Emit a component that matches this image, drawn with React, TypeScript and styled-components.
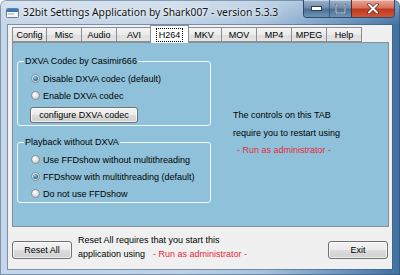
import React from "react";
import styled, { createGlobalStyle } from "styled-components";

const GlobalStyle = createGlobalStyle`
  html, body { margin: 0; padding: 0; width: 400px; height: 275px; overflow: hidden; background: #ffffff; }
  body { font-family: "Liberation Sans", Arial, sans-serif; }
  * { box-sizing: border-box; }
`;

const Window = styled.div`
  width: 400px;
  height: 275px;
  display: flex;
  flex-direction: column;
  border-radius: 6px 6px 0 0;
  overflow: hidden;
  background:
    linear-gradient(to bottom, rgba(255, 255, 255, 0.35) 0px, rgba(255, 255, 255, 0) 25px),
    linear-gradient(to right, #c4d6e8 0%, #bfd2e5 45%, #a6c1dc 66%, #6f98c2 84%, #41709f 100%);
  box-shadow: inset 0 0 0 1px rgba(40, 70, 100, 0.45);
`;

const TitleBar = styled.div`
  height: 25px;
  flex-shrink: 0;
  display: flex;
  align-items: flex-start;
  padding: 0 5px 0 6px;
`;

const AppIcon = styled.svg`
  width: 13px;
  height: 10px;
  margin-top: 8px;
  flex-shrink: 0;
`;

const TitleText = styled.div`
  margin-left: 4px;
  margin-top: 5px;
  font-family: "Noto Sans", "Open Sans", sans-serif;
  font-size: 10.3px;
  line-height: 14px;
  color: #111;
  white-space: nowrap;
  text-shadow: 0 0 6px rgba(255, 255, 255, 0.9), 0 0 2px rgba(255, 255, 255, 0.8);
`;

const CaptionGroup = styled.div`
  margin-left: auto;
  display: flex;
  height: 18px;
  border: 1px solid #2f4a68;
  border-top: none;
  border-radius: 0 0 4px 4px;
  overflow: hidden;
`;

const CaptionButton = styled.div<{ $w: number; $close?: boolean }>`
  width: ${(p) => p.$w}px;
  height: 100%;
  display: flex;
  align-items: center;
  justify-content: center;
  border-left: ${(p) => (p.$close ? "1px solid #5a2a22" : "1px solid rgba(40, 60, 90, 0.6)")};
  background: ${(p) =>
    p.$close
      ? "linear-gradient(to bottom, #e9a898 0%, #d5735d 45%, #c2381d 55%, #d0563a 100%)"
      : "linear-gradient(to bottom, #9cb4cc 0%, #6f8eae 45%, #4d6f96 55%, #6e93b9 100%)"};
  box-shadow: inset 0 1px 0 rgba(255, 255, 255, 0.45);
  &:first-child { border-left: none; }
`;

const Client = styled.div`
  flex: 1;
  margin: 0 8px 6px 8px;
  background: #f0f0f0;
  display: flex;
  flex-direction: column;
  box-shadow: 0 0 0 1px rgba(60, 90, 120, 0.55);
`;

const TabStrip = styled.div`
  height: 17px;
  flex-shrink: 0;
  display: flex;
  align-items: flex-end;
  padding-left: 4px;
  position: relative;
  z-index: 1;
`;

const Tab = styled.div<{ $active?: boolean }>`
  width: ${(p) => (p.$active ? 39 : 35)}px;
  height: ${(p) => (p.$active ? 18 : 15)}px;
  margin: ${(p) => (p.$active ? "0 -2px -1px -2px" : "0")};
  border: 1px solid #8c8e94;
  border-bottom: ${(p) => (p.$active ? "none" : "1px solid #8c8e94")};
  border-left: ${(p) => (p.$active ? "1px solid #8c8e94" : "none")};
  background: ${(p) =>
    p.$active ? "#ffffff" : "linear-gradient(to bottom, #f4f4f4 0%, #ebebeb 50%, #dedede 51%, #e4e4e4 100%)"};
  display: flex;
  align-items: center;
  justify-content: center;
  font-size: 9px;
  color: #000;
  position: relative;
  z-index: ${(p) => (p.$active ? 2 : 1)};
  &:first-child { border-left: 1px solid #8c8e94; }
`;

const FocusLabel = styled.span`
  outline: 1px dotted #000;
  padding: 1px 2px;
  line-height: 10px;
`;

const Panel = styled.div`
  height: 185px;
  flex-shrink: 0;
  margin: 0 3px 0 4px;
  border: 1px solid #8c8e94;
  background: #8fc2da;
  display: flex;
`;

const LeftColumn = styled.div`
  padding: 13px 0 0 4px;
  display: flex;
  flex-direction: column;
  gap: 11px;
`;

const GroupBox = styled.fieldset<{ $pb: number }>`
  margin: 0;
  width: 194px;
  min-inline-size: 0;
  border: 1px solid #f2f8fb;
  border-radius: 3px;
  padding: 3px 0 ${(p) => p.$pb}px 13px;
`;

const Legend = styled.legend`
  padding: 0 1px;
  margin-left: -7px;
  font-size: 9px;
  line-height: 11px;
  color: #000;
`;

const RadioRow = styled.div`
  height: 17px;
  display: flex;
  align-items: center;
  gap: 3px;
  font-size: 9px;
  color: #000;
  white-space: nowrap;
`;

const RadioCircle = styled.span<{ $checked?: boolean }>`
  width: 9px;
  height: 9px;
  border-radius: 50%;
  border: 1px solid #8a8c8e;
  background: radial-gradient(circle at 35% 30%, #ffffff 0%, #e6e6e6 45%, #c9cbcd 100%);
  display: flex;
  align-items: center;
  justify-content: center;
  flex-shrink: 0;
  &::after {
    content: "";
    display: ${(p) => (p.$checked ? "block" : "none")};
    width: 5px;
    height: 5px;
    border-radius: 50%;
    background: radial-gradient(circle at 40% 35%, #8fd0f4 0%, #2a7ab8 55%, #0f3f70 100%);
  }
`;

const PushButton = styled.div<{ $w: number; $h: number }>`
  width: ${(p) => p.$w}px;
  height: ${(p) => p.$h}px;
  border: 1px solid #707070;
  border-radius: 3px;
  background: linear-gradient(to bottom, #f3f3f3 0%, #ebebeb 48%, #dddddd 52%, #cfcfcf 100%);
  box-shadow: inset 0 0 0 1px rgba(255, 255, 255, 0.7);
  display: flex;
  align-items: center;
  justify-content: center;
  font-size: 9px;
  color: #000;
  white-space: nowrap;
  flex-shrink: 0;
`;

const ConfigureButton = styled(PushButton)`
  margin-top: 3px;
  margin-left: -1px;
`;

const RightColumn = styled.div`
  padding: 64px 0 0 22px;
  font-size: 9px;
  line-height: 17.5px;
  color: #000;
  white-space: nowrap;
`;

const RedText = styled.span<{ $pad: number }>`
  color: #e4283a;
  padding-left: ${(p) => p.$pad}px;
`;

const BottomBar = styled.div`
  flex: 1;
  display: flex;
  align-items: flex-start;
  padding: 14px 4px 0 4px;
`;

const Note = styled.div`
  margin-left: 6px;
  margin-top: -8px;
  font-size: 9px;
  line-height: 14px;
  color: #000;
  white-space: nowrap;
`;

const Spacer = styled.div`
  flex: 1;
`;

const tabs = ["Config", "Misc", "Audio", "AVI", "H264", "MKV", "MOV", "MP4", "MPEG", "Help"];

export default function App() {
  return (
    <>
      <GlobalStyle />
      <Window>
        <TitleBar>
          <AppIcon viewBox="0 0 13 10">
            <rect x="0.5" y="0.5" width="12" height="9" rx="1" fill="#f4f6f8" stroke="#6d7f92" />
            <rect x="1" y="1" width="11" height="3" fill="#3c78b8" />
            <rect x="2" y="5.5" width="6" height="1" fill="#9aa8b6" />
          </AppIcon>
          <TitleText>32bit Settings Application by Shark007 - version 5.3.3</TitleText>
          <CaptionGroup>
            <CaptionButton $w={25}>
              <svg width="11" height="5" viewBox="0 0 11 5">
                <rect x="0.5" y="0.5" width="10" height="4" fill="#ffffff" stroke="#2c3f55" strokeWidth="1" />
              </svg>
            </CaptionButton>
            <CaptionButton $w={22}>
              <svg width="11" height="10" viewBox="0 0 11 10">
                <rect x="1" y="1" width="9" height="8" fill="none" stroke="#2c3f55" strokeWidth="2" />
                <rect x="1" y="1" width="9" height="8" fill="none" stroke="#e8eef4" strokeWidth="1" />
              </svg>
            </CaptionButton>
            <CaptionButton $w={43} $close>
              <svg width="12" height="11" viewBox="0 0 12 11">
                <path d="M2 1.5 L10 9.5 M10 1.5 L2 9.5" stroke="#6b2418" strokeWidth="3.4" strokeLinecap="round" />
                <path d="M2 1.5 L10 9.5 M10 1.5 L2 9.5" stroke="#ffffff" strokeWidth="2" strokeLinecap="round" />
              </svg>
            </CaptionButton>
          </CaptionGroup>
        </TitleBar>
        <Client>
          <TabStrip>
            {tabs.map((t) => (
              <Tab key={t} $active={t === "H264"}>
                {t === "H264" ? <FocusLabel>{t}</FocusLabel> : t}
              </Tab>
            ))}
          </TabStrip>
          <Panel>
            <LeftColumn>
              <GroupBox $pb={2}>
                <Legend>DXVA Codec by Casimir666</Legend>
                <RadioRow>
                  <RadioCircle $checked />
                  Disable DXVA codec (default)
                </RadioRow>
                <RadioRow>
                  <RadioCircle />
                  Enable DXVA codec
                </RadioRow>
                <ConfigureButton $w={108} $h={16}>configure DXVA codec</ConfigureButton>
              </GroupBox>
              <GroupBox $pb={0}>
                <Legend>Playback without DXVA</Legend>
                <RadioRow>
                  <RadioCircle />
                  Use FFDshow without multithreading
                </RadioRow>
                <RadioRow>
                  <RadioCircle $checked />
                  FFDshow with multithreading (default)
                </RadioRow>
                <RadioRow>
                  <RadioCircle />
                  Do not use FFDshow
                </RadioRow>
              </GroupBox>
            </LeftColumn>
            <RightColumn>
              The controls on this TAB
              <br />
              require you to restart using
              <br />
              <RedText $pad={4}>- Run as administrator -</RedText>
            </RightColumn>
          </Panel>
          <BottomBar>
            <PushButton $w={60} $h={18}>Reset All</PushButton>
            <Note>
              Reset All requires that you start this
              <br />
              application using
              <RedText $pad={8}>- Run as administrator -</RedText>
            </Note>
            <Spacer />
            <PushButton $w={60} $h={18}>Exit</PushButton>
          </BottomBar>
        </Client>
      </Window>
    </>
  );
}
